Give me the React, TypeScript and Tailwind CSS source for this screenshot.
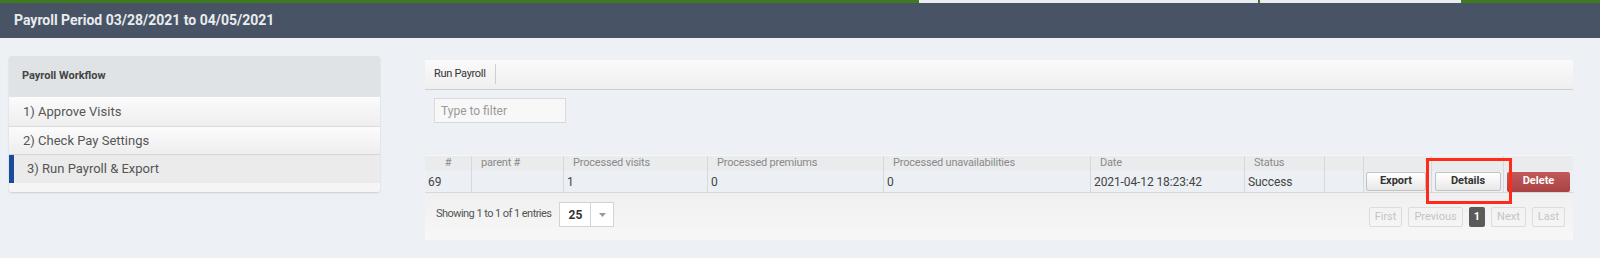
import React from 'react';

const cols = [
  { label: '#', w: 'w-[47px]', center: true },
  { label: 'parent #', w: 'w-[92px]' },
  { label: 'Processed visits', w: 'w-[144px]' },
  { label: 'Processed premiums', w: 'w-[176px]' },
  { label: 'Processed unavailabilities', w: 'w-[207px]' },
  { label: 'Date', w: 'w-[154px]' },
  { label: 'Status', w: 'w-[80px]' },
  { label: '', w: 'w-[39px]' },
  { label: '', w: 'w-[68px]' },
  { label: '', w: 'w-[72px]' },
  { label: '', w: 'flex-1' },
];

const row = ['69', '', '1', '0', '0', '2021-04-12 18:23:42', 'Success', ''];

function PageButton({ label, active }: { label: string; active?: boolean }) {
  return (
    <div
      className={
        active
          ? 'h-[20px] px-[5px] flex items-center rounded-[2px] bg-[#5a5a5a] text-white font-bold text-[11px]'
          : 'h-[20px] px-[5px] flex items-center rounded-[2px] border border-[#dcdcdc] text-[#c4c4c4] text-[11px]'
      }
    >
      {label}
    </div>
  );
}

export default function App() {
  return (
    <div className="relative w-[1600px] h-[258px] bg-[#edf0f4] font-['Roboto','Liberation_Sans',sans-serif] overflow-hidden">
      {/* top strip */}
      <div className="flex h-[3px] bg-[#3f7a1e]">
        <div className="w-[919px]" />
        <div className="w-[339px] bg-[#e9ecf1]" />
        <div className="w-[2px]" />
        <div className="w-[201px] bg-[#e9ecf1]" />
      </div>
      <div className="h-[35px] bg-[#485465] flex items-center px-[14px]">
        <h1 className="text-[14px] font-bold text-[#e9ecef]">Payroll Period 03/28/2021 to 04/05/2021</h1>
      </div>

      <div className="flex items-start pl-[9px]">
        {/* workflow card */}
        <div className="w-[371px] mt-[18px] rounded-[3px] bg-[#f5f5f5] shadow-[0_1px_2px_rgba(0,0,0,0.15)] overflow-hidden">
          <div className="h-[41px] bg-[#e0e3e6] flex items-center px-[13px] text-[11px] font-bold text-[#444]">
            Payroll Workflow
          </div>
          <div className="h-[30px] flex items-center px-[14px] text-[13px] text-[#555] bg-gradient-to-b from-[#fbfbfb] to-[#eeeeee] border-b border-[#dcdcdc]">
            1) Approve Visits
          </div>
          <div className="h-[28px] flex items-center px-[14px] text-[13px] text-[#555] bg-gradient-to-b from-[#fbfbfb] to-[#eeeeee] border-b border-[#d6d6d6]">
            2) Check Pay Settings
          </div>
          <div className="h-[28px] flex items-center pl-[13px] text-[13px] text-[#555] bg-[#ebebeb] border-l-[5px] border-[#1a4a9c]">
            3) Run Payroll &amp; Export
          </div>
          <div className="h-[9px] bg-[#f5f5f5]" />
        </div>

        {/* right panel */}
        <div className="w-[1148px] ml-[45px] mt-[22px]">
          <div className="h-[30px] flex items-center bg-gradient-to-b from-[#fafafa] to-[#efefef] border-b border-[#cdd0d3]">
            <div className="h-[20px] mt-[-1px] flex items-center px-[9px] border-r border-[#cfcfcf] text-[11px] tracking-[-0.3px] text-[#333]">
              Run Payroll
            </div>
          </div>
          <div className="pl-[9px] pt-[8px]">
            <div className="w-[132px] h-[25px] border border-[#d7d9dc] bg-[#f8f8f8] flex items-center px-[6px] text-[12px] text-[#9a9a9a]">
              Type to filter
            </div>
          </div>

          {/* table */}
          <div className="mt-[32px]">
            <div className="flex h-[16px] bg-[#e9ebed] border-t border-[#f6f6f6]">
              {cols.map((c, i) => (
                <div
                  key={i}
                  className={`${c.w} h-full flex items-center text-[11px] tracking-[-0.2px] text-[#8a8a8a] border-[#d6d9dc] ${i < cols.length - 1 ? 'border-r' : ''} ${c.center ? 'justify-center' : 'pl-[9px]'}`}
                >
                  {c.label}
                </div>
              ))}
            </div>
            <div className="flex h-[22px] bg-[#eceff3] border-b border-[#d6d9dc]">
              {row.map((v, i) => (
                <div
                  key={i}
                  className={`${cols[i].w} h-full flex items-center text-[12px] tracking-[-0.1px] text-[#444] border-r border-[#d6d9dc] pl-[3px]`}
                >
                  {v}
                </div>
              ))}
              <div className="w-[68px] h-full flex items-center justify-start pl-[2px] border-r border-[#d6d9dc]">
                <div className="w-[60px] h-[19px] flex items-center justify-center rounded-[2px] border border-[#c2c2c2] bg-gradient-to-b from-[#ffffff] to-[#e8e8e8] text-[11px] font-bold text-[#333]">
                  Export
                </div>
              </div>
              <div className="w-[72px] h-full flex items-center pl-[3px] border-r border-[#d6d9dc]">
                <div className="w-[66px] h-[19px] flex items-center justify-center rounded-[2px] border border-[#c2c2c2] bg-gradient-to-b from-[#ffffff] to-[#e8e8e8] text-[11px] font-bold text-[#333]">
                  Details
                </div>
              </div>
              <div className="flex-1 h-full flex items-center pl-[3px]">
                <div className="w-[63px] h-[20px] flex items-center justify-center rounded-[2px] bg-gradient-to-b from-[#c25a5a] to-[#a84343] text-[11px] font-bold text-white">
                  Delete
                </div>
              </div>
            </div>
            <div className="h-[47px] flex items-start justify-between pt-[9px] pl-[11px] pr-[10px] bg-gradient-to-b from-[#f0f0f0] to-[#f7f7f7]">
              <div className="flex items-center gap-[8px]">
                <span className="text-[11px] tracking-[-0.55px] text-[#555]">Showing 1 to 1 of 1 entries</span>
                <div className="h-[25px] w-[55px] flex border border-[#d3d3d3] bg-white">
                  <div className="w-[31px] flex items-center justify-center text-[12px] font-bold text-[#333] border-r border-[#d3d3d3]">25</div>
                  <div className="flex-1 flex items-center justify-center">
                    <svg width="7" height="4" viewBox="0 0 7 4"><path d="M0 0h7L3.5 4z" fill="#999" /></svg>
                  </div>
                </div>
              </div>
              <div className="flex items-center gap-[6px] mt-[5px] mr-[-2px]">
                <PageButton label="First" />
                <PageButton label="Previous" />
                <PageButton label="1" active />
                <PageButton label="Next" />
                <PageButton label="Last" />
              </div>
            </div>
          </div>
        </div>
      </div>

      {/* highlight box */}
      <div className="absolute left-[1426px] top-[158px] w-[86px] h-[46px] border-[3px] border-[#ff2a1a]" />
    </div>
  );
}
